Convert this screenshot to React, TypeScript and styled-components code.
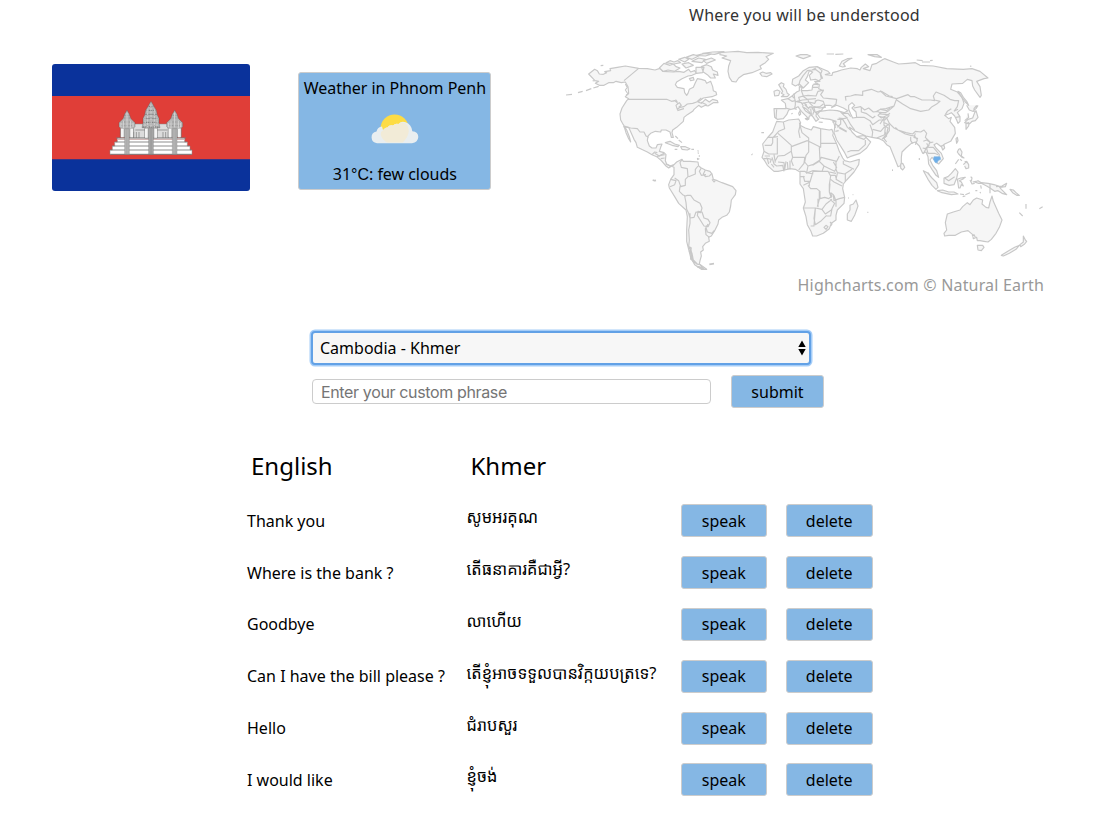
import React from 'react';
import styled, { createGlobalStyle } from 'styled-components';

const GlobalStyle = createGlobalStyle`
  * { box-sizing: border-box; }
  body {
    margin: 0;
    background: #fff;
    color: #000;
    font: 16px/22px 'Noto Sans', 'Open Sans', sans-serif;
  }
`;

const Page = styled.main`
  width: 1114px;
  height: 830px;
  overflow: hidden;
`;

const Overview = styled.section`
  display: flex;
  align-items: flex-start;
  height: 331px;
  padding-left: 52px;
`;

const Flag = styled.svg`
  display: block;
  width: 198px;
  height: 127px;
  margin-top: 64.4px;
  border-radius: 3px;
`;

const WeatherCard = styled.div`
  display: flex;
  flex-direction: column;
  align-items: center;
  justify-content: space-between;
  width: 193px;
  height: 118px;
  margin: 72px 0 0 48.4px;
  padding: 4px 0 3px;
  border: 1px solid #ccc;
  border-radius: 3px;
  background: #85b7e4;
  white-space: nowrap;
  letter-spacing: -0.03px;
`;

const WeatherIcon = styled.svg`
  width: 50px;
  height: 50px;
`;

const Unit = styled.span`
  font-family: 'Liberation Sans', sans-serif;
`;

const MapPanel = styled.div`
  width: 490px;
  margin-left: 68.6px;
  padding-top: 4px;
`;

const MapTitle = styled.div`
  height: 36px;
  padding-right: 1px;
  text-align: center;
  color: #333;
  letter-spacing: 0.2px;
`;

const WorldSvg = styled.svg`
  display: block;
  width: 490px;
  height: 234px;
  fill: #f6f6f6;
  stroke: #c8c8c8;
  stroke-width: 3.5;
  stroke-linejoin: round;
`;

const Credits = styled.div`
  padding-right: 6px;
  text-align: right;
  color: #999;
  letter-spacing: 0.18px;
`;

const PhraseForm = styled.form`
  display: flex;
  flex-wrap: wrap;
  align-items: center;
  width: 514px;
  margin-left: 311px;
  row-gap: 10px;
`;

const SelectFrame = styled.div`
  display: flex;
  align-items: center;
  justify-content: space-between;
  width: 500px;
  height: 34px;
  padding: 0 3px 0 7px;
  border: 2px solid #62a1e6;
  border-radius: 4px;
  background: #f7f7f7;
  box-shadow: 0 0 0 1.5px #a5cdf8;
`;

const Arrows = styled.svg`
  width: 8px;
  height: 16px;
`;

const PhraseInput = styled.input`
  width: 399px;
  height: 25px;
  margin: 0 20px 0 1px;
  padding: 0 8px;
  border: 1px solid #ccc;
  border-radius: 4px;
  background: #fff;
  font: 16px 'Inter', sans-serif;
  letter-spacing: -0.36px;
  outline: none;
  &::placeholder { color: #757575; opacity: 1; }
`;

const Button = styled.button<{ $width: number }>`
  width: ${(p) => p.$width}px;
  height: 33px;
  padding: 0;
  border: 1px solid #ccc;
  border-radius: 3px;
  background: #85b7e4;
  color: #000;
  font: 16px/22px 'Noto Sans', 'Open Sans', sans-serif;
`;

const Phrases = styled.section`
  width: 640px;
  margin: 36px 0 0 247px;
`;

const Row = styled.div`
  display: grid;
  grid-template-columns: 219.500px 214.500px 104.500px 88px;
  align-items: center;
  height: 51.8px;
  white-space: nowrap;
`;

const Heading = styled.h2`
  margin: 0;
  padding-left: 4px;
  font-size: 24px;
  line-height: 32px;
  font-weight: 400;
`;

const Translation = styled.div`
  padding-bottom: 7px;
  font-family: 'Noto Sans', 'Noto Sans Khmer', 'Khmer OS', sans-serif;
  font-size: 16.4px;
`;

const HeaderRow = styled(Row)`
  height: 44px;
  margin-bottom: 7px;
`;

const phrases = [
  ['Thank you', 'សូមអរគុណ'],
  ['Where is the bank ?', 'តើធនាគារគឺជាអ្វី?'],
  ['Goodbye', 'លាហើយ'],
  ['Can I have the bill please ?', 'តើខ្ញុំអាចទទួលបានវិក្កយបត្រទេ?'],
  ['Hello', 'ជំរាបសួរ'],
  ['I would like', 'ខ្ញុំចង់'],
];

const SideTower = ({ x }: { x: number }) => (
  <g transform={`translate(${x} 0)`}>
    <path d="M0 166l-3 6-4 6-3 10-2 4-12 12v12l4 4v28h40v-28l4-4v-12l-12-12-2-4-3-10-4-6z" fill="#b4b4b4" stroke="#555" />
    <path d="M-9 190H9M-14 202h28M-18 213h36M-10 182H10" stroke="#555" strokeDasharray="3 2" />
    <path d="M-18 205v12M-11 198v22M0 174v44M11 198v22M18 205v12" stroke="#ddd" strokeWidth="2.5" />
    <path d="M-14 222v26M14 222v26" stroke="#f4f4f4" strokeWidth="8" />
    <path d="M-7 222H7v77H-7z" fill="#b9b9b9" stroke="#777" />
    <path d="M-2 222v77M3 222v77" stroke="#8c8c8c" />
  </g>
);

const CambodiaFlag = () => (
  <Flag viewBox="36 28 594 381" preserveAspectRatio="none">
    <path fill="#0a329b" d="M36 28h594v381H36z" />
    <path fill="#e03e38" d="M36 124h594v190H36z" />
    <g strokeWidth="1.5">
      <path d="M270 208h126v44H270z" fill="#dcdcdc" stroke="#888" />
      <path d="M286 226h96M281 232v18M289 232v18M297 232v18M369 232v18M377 232v18M385 232v18" stroke="#999" strokeWidth="3" />
      <path d="M232 250h202v12h8v12h8v12h6v13H210v-13h7v-12h7v-12h8z" fill="#fff" stroke="#888" />
      <path d="M228 250h210M226 262h214M217 274h232M211 286h244M211 299h244" stroke="#777" strokeWidth="2.5" />
      <path d="M232 254h202" stroke="#c9a9a8" strokeWidth="3" />
    </g>
    <SideTower x={261} />
    <SideTower x={404} />
    <path d="M333 140l-5 8-5 9-6 10-3 14-5 10v14l-3 14h8v31h38v-31h8l-3-14v-14l-5-10-3-14-6-10-5-9z" fill="#b4b4b4" stroke="#555" />
    <path d="M326 155h14M320 167h26M316 179h34M313 191h40M311 203h44M308 217h50" stroke="#555" strokeWidth="2" strokeDasharray="4 2" />
    <path d="M333 150v68M323 164v54M343 164v54M315 188v30M351 188v30" stroke="#d8d8d8" strokeWidth="2.5" strokeDasharray="7 3" />
    <path d="M319 222v27M347 222v27" stroke="#f4f4f4" strokeWidth="8" />
    <path d="M326 220h14v79h-14z" fill="#aaa" stroke="#666" />
    <path d="M333 222v77" stroke="#888" strokeWidth="2" />
  </Flag>
);

const FewClouds = () => (
  <WeatherIcon viewBox="0 0 50 50">
    <circle cx="24.6" cy="22.400" r="14" fill="#fddc45" />
    <path d="M7 37.200a5.900 5.900 0 0 1-.5-11.700Q7.500 21 12 20.400L13 24Q15 21 17.500 21.500 19 18.800 23 19.500 25.500 16.800 28.500 18 31 14.800 35.500 16.200 41.500 18 42.300 25.300 48.300 26 48.300 31 48 36.500 42 37.200z" fill="#e9eef0" />
    <path d="M10.700 28.500Q11 25 14 23.500 15.500 21 17.500 21.500 19 18.800 23 19.500 25.500 16.800 28.500 18 32 15.500 36 17.800 39.500 22 38.500 27 37 33 32.500 36.500H17Q11.500 33 10.700 28.500" fill="#f2ebd7" />
  </WeatherIcon>
);

const WorldMap = () => (
  <WorldSvg viewBox="0 0 1470 702">
    {/* North America, Greenland and the Caribbean */}
    <path d="M86 102L104 88 112 92 118 102 130 103 140 98 134 95 152 92 150 86 172 82 196 78 236 85 262 86 285 90 300 85 308 94 340 96 356 94 372 97 386 88 392 96 404 92 410 100 396 106 384 108 366 116 350 126 346 134 352 142 372 146 374 158 380 166 384 160 388 148 400 142 406 128 412 116 424 118 436 122 440 130 452 124 458 140 460 152 468 156 470 164 456 170 430 174 414 186 424 190 436 178 448 186 458 178 472 182 474 188 460 188 444 198 436 196 424 202 416 196 402 208 398 214 382 224 372 232 370 244 350 262 338 270 336 278 340 292 334 292 330 276 318 270 304 270 302 276 286 274 272 280 264 288 262 302 268 318 276 324 288 324 292 314 306 312 302 322 298 334 312 338 318 344 316 362 320 372 330 378 340 374 340 378 332 380 326 384 318 378 304 362 290 350 276 344 262 336 232 322 228 308 222 298 216 284 206 262 192 258 198 278 206 296 212 306 208 290 200 270 190 254 182 240 180 222 186 204 200 182 206 176 196 170 206 160 204 140 196 126 184 128 168 124 160 128 146 128 132 136 118 136 106 130 116 124 105 122z" />
    <path fill="none" d="M236 85L192 122M204 178H320L334 184 344 182 354 190 348 196 352 208 360 202 372 200 382 192 398 190 410 186 424 174M190 260L212 264 232 266 240 276 252 276 258 288 266 292M276 344L284 336 292 338M290 350L302 346 314 344M196 132l6 10-6 8 8 12-6 4M340 184l8-4 4 6M348 196l10-8 6 8-8 6M352 212l12-4 8-2M422 186l18 8" />
    <path d="M18 165l18-2M54 158l14-4M78 152l16-6M100 144l16-5M122 77l8-1M98 122l6 1M298 84l14-14 18 6 10-4 8 8 12 4-16 10-20-4-14 4zM318 68l12-6 12 4 12-4 8 6-20 4zM356 58l18-6 12 6-12 8zM378 52l22-8 16 4-20 10zM410 46l24-6 22 2-20 6zM428 40l30-4 34-1-28 8zM366 72l20-4 14 8-22 8zM396 64l20-10 20 4-10 10zM430 62l24-8 12 6-26 10zM408 82l24 0-4 16-20 2zM424 80l16-6 14 6 4 10 14 6 2 10-14-4 6 12-14 0-10-10-12-8zM388 116l12-4 2 8-10 2zM316 308l14-4 14 8 14 4-4 4-18-4zM362 320l14 0 14 6-8 4-16-2zM344 328l8 0M394 328l8 0M346 288l8 8M356 300l10 8M414 334l1 4M418 346l0 4M412 354l2 6" />
    <path d="M480 38L504 36 534 34 560 38 594 37 640 40 618 50 626 58 616 68 600 78 604 86 576 98 550 104 536 114 528 126 516 124 508 112 504 94 506 78 512 62 500 58 486 54 500 48 480 44z" />
    <path d="M600 100l8-4 10 4 14-2 4 4-16 8-14-2zM708 48l14-4 20 0 10 4-22 8zM800 42l22 0M826 43l24-1M924 44l28 0 12 8-20-2z" />
    {/* South America */}
    <g transform="translate(240 330)">
      <path d="M78 42L90 48 100 46 110 36 126 28 130 34 150 34 174 36 176 48 184 54 196 60 210 64 216 72 220 88 232 92 246 98 262 104 278 110 288 122 286 134 274 150 272 168 268 186 260 196 246 202 236 210 234 222 224 242 214 258 206 262 208 274 196 280 188 290 190 300 182 306 184 318 180 332 178 342 200 358 184 358 164 344 152 322 146 298 140 274 140 240 142 200 138 180 116 160 104 140 88 114 86 104 92 88 102 74 102 52z" />
      <path fill="none" d="M126 28l-6 10 4 14 18 4 2 24-8 8v18l-14 4-6-18-12-8M136 106l-16 4-2 14 10 10 8 4 6-2 10 0 10 14 18 10 6 14-4 14-14-2-6 16-12 2-4-14-6-12-2-20-4-20M174 48l-8 10 0 14-20 8M184 54l-6 10 6 12 14-2M196 60l-6 12 6 8 12-2 8-8M172 198l2-14 12 2 6 18 12 4 6 10-6 12-12-2-20-32M198 232l4 14 14 4 6-8M204 222l-8 14 2 18 10 8M150 190l0 30-4 20 2 30-2 20 10 20 4 20 14 14M92 88l16 4-4 12-14 6M148 290l6 4-6 10 8 8-4 14 12 14M156 312l-4-8 6 18-2 6 14 14 10 2 10 12-16-6" />
      <path strokeWidth="5" d="M38 90l6 2 4-1M208 343l14-2M172 350l20 6M152 296l2 34" />
      <path fill="none" d="M44 10l14 8 14-8M62 26l12-2M174 0v2M175 10v2M172 28l6-2M216 88l6 8 4-4M334 14h3" />
    </g>
    {/* Europe and Asia */}
    <path d="M642 206L678 206 676 190 664 180 684 176 696 168 710 156 718 152 718 140 726 142 724 152 742 152 756 150 758 136 770 130 764 124 780 124 766 118 752 120 748 106 758 96 748 92 742 110 736 120 746 128 730 144 724 138 718 132 706 138 696 132 698 118 716 108 730 92 748 82 772 80 786 86 804 94 810 100 796 104 816 106 818 98 832 94 844 90 872 84 892 86 900 90 904 82 916 72 926 80 910 86 930 92 936 74 950 70 970 58 974 56 1000 66 1016 72 1044 70 1066 68 1080 76 1120 78 1160 86 1210 88 1236 86 1260 94 1284 114 1272 116 1250 124 1260 140 1264 166 1260 172 1244 150 1238 138 1236 122 1222 118 1208 130 1176 132 1172 148 1192 156 1206 172 1212 190 1206 206 1196 214 1192 218 1200 230 1200 244 1194 250 1190 240 1184 228 1174 218 1166 222 1154 226 1166 236 1174 232 1170 244 1184 262 1186 280 1172 304 1154 312 1144 320 1130 310 1122 314 1128 324 1144 340 1150 356 1136 372 1130 368 1124 360 1116 352 1110 360 1118 376 1130 392 1136 412 1128 406 1116 388 1106 372 1104 350 1098 336 1088 340 1078 318 1066 306 1054 310 1038 324 1026 336 1024 352 1024 376 1014 380 1006 360 990 320 980 314 970 302 958 296 936 292 918 288 896 278 884 272 876 266 868 262 876 276 890 290 912 286 932 306 920 324 900 340 870 350 862 354 854 338 830 300 822 278 824 262 828 244 810 238 792 236 780 234 772 222 780 214 810 210 832 212 852 218 864 212 850 204 830 196 820 200 810 196 796 196 788 206 784 212 770 216 768 228 776 238 768 244 760 232 750 218 738 206 728 200 736 212 756 226 748 228 746 238 740 230 724 214 714 200 702 206 686 210 680 224 670 236 652 238 644 232z" />
    <path fill="#fff" d="M866 196L876 188 884 196 876 204 888 216 890 232 878 234 872 222 866 208z" />
    <path d="M838 78l8-14 16-8 14-1-12 6-14 10 6 8-8 2zM642 154l10-4 8 4-4 12-12 2zM656 134l8-6 8 4-2 8 8 8 4 12 6 4-6 6-18 0 8-6-8-4 4-6zM716 220l4-8 2 10-4 4zM736 236l10-2-4 6zM776 246l12 1M816 246l10-2M694 222l4-2M1070 60l18 2M1086 66l24 0M1110 62l8-1M1230 78l4 1M1194 154l8 4 8 14 10 12 6 12-10-10-8-10zM1220 196l8 14 10 4 10-8 6-10M1250 196l-8 10 0 10M1224 220l2 12-12 10M1248 212l6 20-8 10-10 2-8 8-14-4 10-10 14-4 6-16zM1218 250l8-2 0 10-8 10zM1188 296l4-4 2 10-4 8zM1144 318l8-2 2 8-6 6z" />
    <g transform="translate(480 0)" fill="none">
      <path d="M236 138l4-16 10-16 12-14 14-2 12-6M276 90l10-2 14 10 4 18-12 10M292 80l14 12-4 10 6 14M290 130l8 4-2 12 14 6-8 12 8 10 18 2 22 2-2 14-14 12M170 208l-2 28M196 204l16 4M204 176l12 8 10-2 0 12-2 12 6 2M216 168l8 8 2 8 18 4 6 10M224 176l-2-16M244 152l6 16-14 4 4 12M250 168l14-2 24 2 6-14 18-4M248 168l14 10 26-2M264 178l2 8 18 4 6-10M230 184l18-4 20-2M246 190l20-4M268 188l14 14 18-2 10-8M254 194l10 10 10-4 8 14-4 10M268 200l14 4 4 14 16-6M284 184l10-4 16 4 6 18-18 2-16-4M280 132l14 2M278 142l16 0M250 188l10 6M258 196l10 12M272 206l2 16" />
      <path d="M378 182l-2-12 16-2 14-4 22 2 0-12 26-6 20 8 10-2 24 14 10 2M402 204l20-4 12 10 12-6 14 12 14-2 10 8M424 202v14l14 4 20 14 8-6M410 232l22 0 18 10 8 12 20 -14 16 0 14 -14M484 216l-10 10 10 8 18-8 8-6M470 214l12-6 18 4 10-8M480 222l24 2M362 216l10 10 10 8-12 2-14-2M368 220l16 0 8 10M382 236l10 18 12 16M352 238l16 0 8 12 6 12 10 8M346 250l10 10 24 14M340 244l6 20M352 262l10-10 0-16M356 272l-10 2M358 264l22 12M382 336l10-4 24 0 20-18 0-14M410 290l22 8 8-8M456 292l2-16-8-22M470 294l24-10 2-24 14-10M458 268l24 6 12-14M490 296l10-8-6-16" />
    </g>
    <g transform="translate(960 0)" fill="none">
      <path d="M0 152l18 16 32 8 34-12 8 6 12 0 22 10 26 0 12 2-4-14 8-12 24 10 18 12 14 4 12 0-4 18-10 14M50 180l18 12 24 14 30 8 24-4 10-10 14-8 10-8-16-4M50 176l-8 22-24 8-18 2M0 218l16 0 10-6 16-14M0 230l20 4 8 16 14 14 12 6 24 8 20 4 8-8 16 2 10-6 8 10-4 12 14 14-4 10-10 10-8-2M46 262l8 8 22 12 16 4M92 286l12 2 8 12-6 14M92 290v12l6 8M106 280l-4 12 12 4M130 304l10-4 12 8 8-2M140 310l6 12 14 0 18 22-2 10M148 314l-8 12 4 14 20 0 10 4M140 322l-10 20M0 252l12-18 0 22 12 8-4 18-14 16M10 246l18 10 0 16-16 24 8 10M214 206l-12 8-6 10M222 214l12-6M228 232l12-2" />
    </g>
    <path fill="#6daee9" stroke="#8dbbe3" strokeWidth="2" d="M1122 350h18l2 8-8 4-2 6h-6l-6-10z" />
    {/* Africa and Madagascar */}
    <g transform="translate(570 210)">
      <path d="M80 34L100 36 116 30 146 27 152 38 150 46 166 54 184 60 190 50 212 56 238 60 246 58 250 70 248 76 260 102 268 124 278 144 284 152 300 156 328 148 326 164 312 186 290 210 280 222 278 236 284 262 282 280 262 300 258 316 258 330 244 340 238 356 220 370 200 378 188 378 182 362 172 344 168 320 160 294 166 276 160 236 150 222 150 200 150 186 136 178 120 176 104 180 84 184 72 184 52 166 44 152 36 142 42 124 38 102 52 84 68 66 74 50z" />
      <path fill="none" d="M100 36l4 20-18 8-16 18H54M84 70l40 36M84 80L68 82v16l-4 8-20 0M82 84v48H56L42 124M124 110l48-18 4 2 0-10-20-16-8-30M124 106v18l-20 12-20 2-8 14M150 46l-4 18 4 20M176 94l36 18V56M212 100h48M176 94v32l-8 10-4 20 10 12 14-4 22-14-2-38M124 124l4 18-4 10 6 16M128 142l38 0M164 144l-2 16-16 20M174 168l-4 20 20 4M188 166l20-12 14 14-6 16-28-2-20 8M208 154l6-12 46 12 8-16M222 168l32 16 6-12-10-16M258 152l0 26 4 10 22 4 22-14M280 152l0 10 32 16M286 190v26M262 190l-4 18 20 12M238 186l20 4M190 182l-10 34-20 10M190 184h44l8 14-4 26 0 22 8 12-10 8-12-4-14 4 0-22-10-8-18 0-8-10M160 198l4 16 14 0 0 14M150 200h14M242 196h14l4 14M242 208l10 8 24 12M240 220l-2 26 6 18M208 244l0 24-6 22M160 294h36l20 4 12-16 18-14M204 266l0 26M216 298l10 14 18-12 10-20-14-12M196 294l-4 32 4 18 18-12 16-16M196 296l-4 52-10 0M230 318l12 0 4-22M242 248l8 6 2 18 16-6 16-4M252 256l6 18 0 16M240 336l6 6-4 6M222 352l6-6 6 4-6 8zM66 142l6 20 8 6 18-2 4 18M72 134l4 24M84 156l18 2 2 20M108 154l-4 26M112 156l2 22M48 144l16 4-4 10M44 138l16 0M40 146l12 0 4 16M120 152l0 26M64 162l8 10M150 184h14l8 6" />
      <path d="M318 270l6 18-10 28-10 18-12-4 0-18 8-12 0-14 10-4zM34 68h8M6 132h2M426 180h3M294 264h3M308 254h2M352 307h3" />
    </g>
    {/* Southeast Asia and Oceania */}
    <g transform="translate(960 300)">
      <path d="M62 72l6-2 6 12-6 8-6-6zM130 92l12 6 14 16 14 14 4 14-6 6-12-12-12-18zM144 98l8 12M172 152l16-2 18 6 16 0 12 6-20 2-28-6zM192 114l12-4 10-10 12-14 8 10-4 18-8 20-14 2-16-6zM232 118l10-4 14-2-8 6-10 4 6 4 6 12-6-4-4 10-4 0-2-14zM236 28l4-2 6 10-2 12 8 6-6-2-10-10-4-6zM240 58l6 4M226 72l10-14M250 74l10-10 6 10 0 10-8 2-4-8M254 64l8 4M272 110l4 4-2 10M278 126l10-2M118 54l0 6M36 91h3M240 162l12 2M256 164l14-6M248 170l8-2M284 126l10-4 10 6 20 2 18 4 14 4 8 10 16 16-14-4-12-8-10 2-14-10-10-6-16-8-8 0zM348 140l18-2 14-8-4 10-16 2M390 148l10 2 8 8 10 8-8 0-12-8zM438 192l0 14M418 218l10 10M478 206l10-6" />
      <path fill="none" d="M330 132v28M194 114l12 8 18-12M270 120l6 12 8-2M302 136l2 10M286 152h6M300 156l2 4" />
      <path d="M202 222L220 216 240 210 248 200 262 188 270 194 280 180 290 174 308 180 306 192 318 202 326 204 330 186 336 168 340 184 348 202 356 220 366 240 358 262 348 280 334 298 324 306 312 304 300 302 292 302 290 292 280 296 278 284 264 272 244 276 226 286 206 286 194 288 192 280 200 270 196 248z" />
      <path d="M292 316h16l4 6-8 10-10-2zM430 288l6 12 4 4-6 8-12 8-2-6 10-8zM418 316l-10 12-20 12-18 8-6-2 22-14 18-10zM276 288l6-4 4 8" />
    </g>
  </WorldSvg>
);

export default function App() {
  return (
    <Page>
      <GlobalStyle />
      <Overview>
        <CambodiaFlag />
        <WeatherCard>
          <div>Weather in Phnom Penh</div>
          <FewClouds />
          <div>31<Unit>°C</Unit>: few clouds</div>
        </WeatherCard>
        <MapPanel>
          <MapTitle>Where you will be understood</MapTitle>
          <WorldMap />
          <Credits>Highcharts.com © Natural Earth</Credits>
        </MapPanel>
      </Overview>
      <PhraseForm onSubmit={(e) => e.preventDefault()}>
        <SelectFrame role="combobox" tabIndex={0}>
          Cambodia - Khmer
          <Arrows viewBox="0 0 8 16"><path d="M4 .5L7.700 7H.3zM.3 9h7.400L4 15.500z" /></Arrows>
        </SelectFrame>
        <PhraseInput placeholder="Enter your custom phrase" />
        <Button $width={93} type="submit">submit</Button>
      </PhraseForm>
      <Phrases>
        <HeaderRow>
          <Heading>English</Heading>
          <Heading>Khmer</Heading>
        </HeaderRow>
        {phrases.map(([english, khmer]) => (
          <Row key={english}>
            <div>{english}</div>
            <Translation lang="km">{khmer}</Translation>
            <Button $width={85.5}>speak</Button>
            <Button $width={87.5}>delete</Button>
          </Row>
        ))}
      </Phrases>
    </Page>
  );
}
